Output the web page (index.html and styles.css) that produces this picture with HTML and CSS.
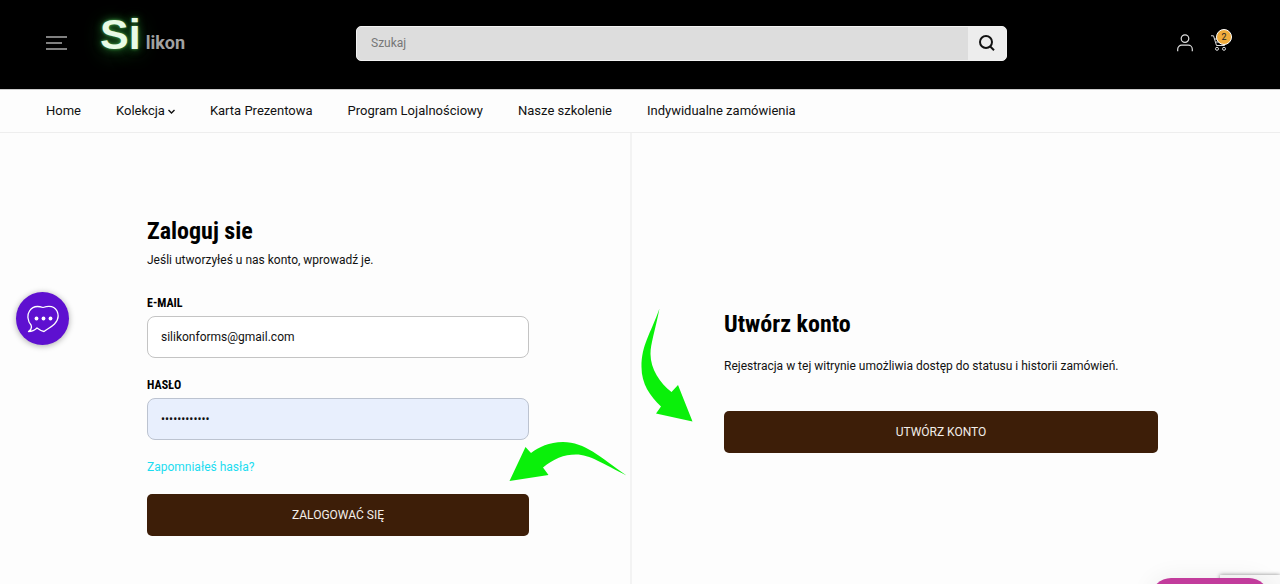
FILE: index.html
```html
<!DOCTYPE html>
<html lang="pl">
<head>
<meta charset="utf-8">
<meta name="viewport" content="width=device-width, initial-scale=1">
<title>Zaloguj sie – Silikon</title>
<link rel="stylesheet" href="styles.css">
</head>
<body>
<header class="header">
  <div class="header-start">
    <button class="icon-button" type="button" aria-label="Menu">
      <svg width="22" height="14" viewBox="0 0 22 14" fill="none" stroke="#fff" stroke-width="1.2"><path d="M0 1h21M0 7h16M0 13h21"/></svg>
    </button>
    <a class="logo" href="#"><span class="logo-si">Si</span><span class="logo-rest">likon</span></a>
  </div>
  <form class="search" role="search">
    <input class="search-input" type="search" placeholder="Szukaj" aria-label="Szukaj">
    <button class="search-button" type="button" aria-label="Wyszukaj">
      <svg width="16" height="16" viewBox="0 0 16 16" fill="none" stroke="#111" stroke-width="2"><circle cx="7" cy="7" r="6"/><path d="M11 11.200l4 4"/></svg>
    </button>
  </form>
  <div class="header-end">
    <a class="icon-link" href="#" aria-label="Konto">
      <svg width="16" height="18" viewBox="0 0 16 18" fill="none" stroke="#ddd" stroke-width="1.200"><circle cx="8" cy="4.600" r="3.800"/><path d="M.7 17.300v-2.100a4 4 0 0 1 4-4h6.600a4 4 0 0 1 4 4v2.100"/></svg>
    </a>
    <a class="icon-link cart" href="#" aria-label="Koszyk">
      <svg width="16" height="16" viewBox="0 0 16 16" fill="none" stroke="#ddd" stroke-width="1"><path d="M0 .8h2.500l3 9.700h8l2-6M3.500 4h12M5 7h9.500"/><circle cx="6" cy="13.800" r="1.500"/><circle cx="13" cy="13.800" r="1.500"/></svg>
      <span class="badge">2</span>
    </a>
  </div>
</header>
<nav class="nav">
  <a href="#">Home</a>
  <a href="#">Kolekcja <svg width="7" height="5" viewBox="0 0 7 5" fill="none" stroke="#111" stroke-width="1.400"><path d="M.5 1l3 3 3-3"/></svg></a>
  <a href="#">Karta Prezentowa</a>
  <a href="#">Program Lojalnościowy</a>
  <a href="#">Nasze szkolenie</a>
  <a href="#">Indywidualne zamówienia</a>
</nav>
<main class="account">
  <section class="login">
    <h1 class="title">Zaloguj sie</h1>
    <p class="text">Jeśli utworzyłeś u nas konto, wprowadź je.</p>
    <form class="login-form">
      <label class="label" for="email">E-MAIL</label>
      <input class="field" id="email" type="email" value="silikonforms@gmail.com">
      <label class="label" for="password">HASŁO</label>
      <input class="field field-filled" id="password" type="password" value="silikonforms">
      <a class="forgot" href="#">Zapomniałeś hasła?</a>
      <button class="button" type="button">ZALOGOWAĆ SIĘ</button>
    </form>
    <svg class="arrow arrow-login" width="118" height="41" viewBox="509 441 118 41" fill="#0af00a"><path d="M626.500 475.500C600 457 585 442 563 442C549 442 539 447 531 453L525.500 447L509.500 481L548.500 475L543 467.500C553 459 564 454.500 576 454.500C590 454.500 603 464 626.500 475.500Z"/></svg>
  </section>
  <section class="register">
    <h2 class="title">Utwórz konto</h2>
    <p class="text">Rejestracja w tej witrynie umożliwia dostęp do statusu i historii zamówień.</p>
    <button class="button" type="button">UTWÓRZ KONTO</button>
    <svg class="arrow arrow-register" width="52" height="114" viewBox="641 308 52 114" fill="#0af00a"><path d="M659.500 308.500C650 335 641.500 345 641.500 367C641.500 384 650 396 661 406.500L656 413.500L692.500 421.500L678 385L671.500 392C660 383 650.500 369 650.500 354C650.500 344 655 331 659.500 308.500Z"/></svg>
  </section>
</main>
<button class="chat" type="button" aria-label="Czat">
  <svg width="32" height="28" viewBox="0 0 32 28" fill="none" stroke="#fff" stroke-width="1.300" stroke-linejoin="round"><path d="M1.500 26.500C4 25 5 22.500 4 20C.5 16 0 10 2.500 6C5 2 10 .5 16 2.500C22 .5 27.500 1.500 30 6C32 10.500 31 15.500 27.500 19C24.500 22 20 24 17 26.500C14 26 12 24.500 10 23C7.500 25.500 5 26.500 1.500 26.500Z"/><g fill="#fff" stroke="none"><circle cx="9.500" cy="13.500" r="1.900"/><circle cx="16.500" cy="13.500" r="1.900"/><circle cx="23.500" cy="13.500" r="1.900"/></g></svg>
</button>
<div class="recaptcha"></div>
<button class="promo" type="button" aria-label="Program"></button>
</body>
</html>
```
FILE: styles.css
```css
* { box-sizing: border-box; }
body {
  margin: 0;
  min-height: 100vh;
  display: flex;
  flex-direction: column;
  overflow-x: hidden;
  background: #fdfdfd;
  color: #111;
  font: 12px/20px Roboto, "Noto Sans", sans-serif;
}
a { color: inherit; text-decoration: none; }
button, input { font: inherit; }
svg { display: block; }
.header {
  display: grid;
  grid-template-columns: 310fr 651fr 220fr;
  align-items: center;
  height: 89px;
  padding: 0 53px 3px 46px;
  background: #000;
}
.header-start, .header-end { display: flex; align-items: center; }
.header-end { justify-content: flex-end; gap: 18px; }
.icon-button { padding: 0; border: 0; background: none; cursor: pointer; }
.logo {
  display: flex;
  align-items: baseline;
  gap: 5px;
  margin: 0 0 18px 32px;
  font-weight: 700;
}
.logo-si {
  color: #e9fbe6;
  font: 700 43px/44px "Liberation Sans", sans-serif;
  text-shadow: 0 0 3px #4fae52, 0 0 9px #22702a, 0 4px 20px #164f1c;
}
.logo-rest { color: #a2a2a2; font-size: 18px; line-height: 20px; }
.search {
  display: flex;
  height: 35px;
  border: 1px solid #f2f2f2;
  border-radius: 5px;
  background: #ddd;
  overflow: hidden;
}
.search-input {
  flex: 1;
  min-width: 0;
  padding: 0 14px;
  border: 0;
  outline: 0;
  background: none;
  appearance: none;
}
.search-input::placeholder { color: #777; opacity: 1; }
.search-button {
  display: grid;
  place-items: center;
  width: 38px;
  padding: 0;
  border: 0;
  background: #ededed;
}
.cart { position: relative; }
.badge {
  position: absolute;
  top: -6px;
  left: 5px;
  width: 16px;
  height: 16px;
  border: 1px solid #fff;
  border-radius: 50%;
  background: #f0ac3c;
  color: #222;
  font-size: 9px;
  line-height: 14px;
  text-align: center;
}
.nav {
  display: flex;
  flex-wrap: wrap;
  align-items: center;
  gap: 0 35px;
  min-height: 44px;
  padding: 0 46px;
  border-top: 1px solid #ccc;
  border-bottom: 1px solid #eee;
  font-size: 13px;
}
.nav a { display: flex; align-items: center; gap: 3px; }
.account {
  flex: 1;
  display: grid;
  grid-template-columns: 632fr 648fr;
}
.login, .register { position: relative; }
.login { padding: 83px 101px 47px 147px; border-right: 2px solid #f3f3f3; }
.register { padding: 176px 122px 47px 92px; }
.title {
  margin: 0;
  color: #000;
  font: 700 24px/30px "Roboto Condensed", Roboto, sans-serif;
}
.text { margin: 4px 0 0; }
.login-form { display: flex; flex-direction: column; margin-top: 23px; }
.label {
  margin-bottom: 3px;
  color: #000;
  font: 700 12px/20px "Roboto Condensed", Roboto, sans-serif;
}
.field {
  width: 100%;
  height: 42px;
  margin-bottom: 17px;
  padding: 0 13px;
  border: 1px solid #c4c4c4;
  border-radius: 8px;
  outline: 0;
  background: #fff;
  color: #111;
}
.field-filled { border-color: #bcc3d0; background: #e8effd; }
.forgot { align-self: flex-start; color: #1cdcf0; }
.button {
  width: 100%;
  height: 42px;
  border: 0;
  border-radius: 5px;
  background: #3d1e08;
  color: #f3eeea;
  cursor: pointer;
}
.login .button { margin-top: 17px; }
.register .text { margin-top: 17px; }
.register .button { margin-top: 35px; }
.arrow { position: absolute; pointer-events: none; }
.arrow-login { right: 3px; top: 308px; }
.arrow-register { left: 9px; top: 175px; }
.chat {
  position: fixed;
  left: 16px;
  top: 292px;
  display: grid;
  place-items: center;
  width: 53px;
  height: 53px;
  padding: 0;
  border: 0;
  border-radius: 50%;
  background: #5e10d0;
  box-shadow: 0 1px 6px #0005;
}
.promo {
  position: fixed;
  right: 11px;
  bottom: -34px;
  width: 118px;
  height: 40px;
  border: 0;
  border-radius: 20px;
  background: #c23c9c;
  box-shadow: 0 0 24px #0001;
}
.recaptcha {
  position: fixed;
  right: 0;
  bottom: -50px;
  width: 60px;
  height: 59px;
  background: #f9f9f9;
  box-shadow: 0 0 4px #888;
}
```
